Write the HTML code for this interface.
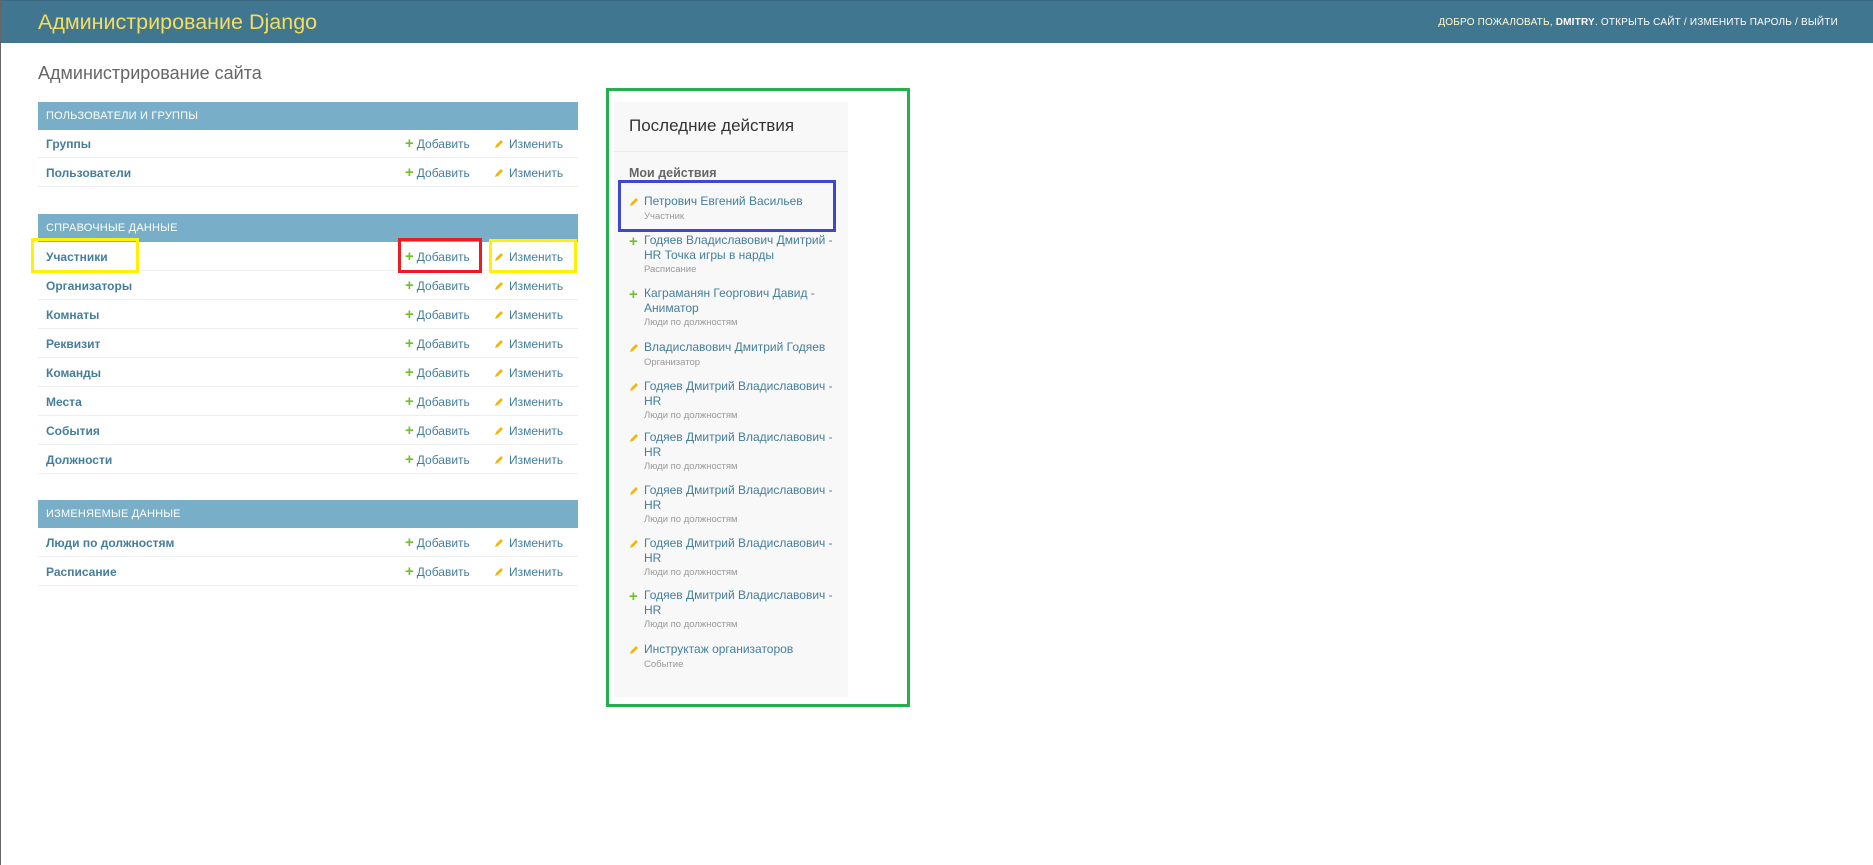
<!DOCTYPE html>
<html><head><meta charset="utf-8"><style>
*{margin:0;padding:0;box-sizing:border-box}
body{width:1873px;height:865px;background:#fff;font-family:"Liberation Sans",sans-serif;position:relative;overflow:hidden;border-left:1px solid #666}
.hdr{position:absolute;left:0;top:0;width:1873px;height:43px;background:#417690;border-top:1px solid #3a6a82}
.brand{position:absolute;left:37px;top:9px;font-size:21.5px;color:#f5dd5d;font-weight:300}
.ut{position:absolute;right:36px;top:16px;font-size:10px;color:#ffc;letter-spacing:.2px;white-space:nowrap}
.ut b{color:#fff}
.ut a{color:#fff}
h1{position:absolute;left:37px;top:63px;font-size:18px;font-weight:300;color:#666}
.cap{position:absolute;left:37px;width:540px;height:28px;background:#79aec8;color:#fff;font-size:11px;padding:8px 0 0 8px;letter-spacing:.2px}
.row{position:absolute;left:37px;width:540px;height:29px;border-bottom:1px solid #eee;font-size:12px}
.row .n{position:absolute;left:8px;top:8px;font-weight:bold;color:#447e9b}
.row .a{position:absolute;left:367px;top:8px;color:#447e9b}
.row .c{position:absolute;left:456px;top:8px;color:#447e9b}
.plus{color:#70bf2b;font-weight:bold;font-size:15px;margin-right:3px;line-height:10px}
.pen{display:inline-block;width:10px;height:10px;margin-right:5px;vertical-align:-1px}
.panel{position:absolute;left:613px;top:102px;width:234px;height:595px;background:#f8f8f8}
.panel h2{position:absolute;left:15px;top:14px;font-size:17px;font-weight:400;color:#333}
.panel .ln{position:absolute;left:0;top:49px;width:234px;height:1px;background:#eaeaea}
.panel h3{position:absolute;left:15px;top:64px;font-size:12.5px;font-weight:bold;color:#666}
.it{position:absolute;left:643px;font-size:12px;color:#447e9b;line-height:14.5px;white-space:nowrap}
.it small{display:block;font-size:9.5px;color:#999;line-height:15px}
.ic{position:absolute;left:-15px;top:3px}
.box{position:absolute;border:3px solid}
</style></head><body>
<div class="hdr"><div class="brand">Администрирование Django</div>
<div class="ut">ДОБРО ПОЖАЛОВАТЬ, <b>DMITRY</b>. <a>ОТКРЫТЬ САЙТ</a> / <a>ИЗМЕНИТЬ ПАРОЛЬ</a> / <a>ВЫЙТИ</a></div></div>
<h1>Администрирование сайта</h1>

<div class="cap" style="top:102px">ПОЛЬЗОВАТЕЛИ И ГРУППЫ</div>
<div class="row" style="top:129px"><span class="n">Группы</span><span class="a"><span class="plus">+</span>Добавить</span><span class="c"><svg class="pen" viewBox="0 0 10 10"><path d="M1 9 L2 6 L7 1 L9 3 L4 8 Z" fill="#efb80b"/></svg>Изменить</span></div>
<div class="row" style="top:158px"><span class="n">Пользователи</span><span class="a"><span class="plus">+</span>Добавить</span><span class="c"><svg class="pen" viewBox="0 0 10 10"><path d="M1 9 L2 6 L7 1 L9 3 L4 8 Z" fill="#efb80b"/></svg>Изменить</span></div>

<div class="cap" style="top:214px">СПРАВОЧНЫЕ ДАННЫЕ</div>
<div class="row" style="top:242px"><span class="n">Участники</span><span class="a"><span class="plus">+</span>Добавить</span><span class="c"><svg class="pen" viewBox="0 0 10 10"><path d="M1 9 L2 6 L7 1 L9 3 L4 8 Z" fill="#efb80b"/></svg>Изменить</span></div>
<div class="row" style="top:271px"><span class="n">Организаторы</span><span class="a"><span class="plus">+</span>Добавить</span><span class="c"><svg class="pen" viewBox="0 0 10 10"><path d="M1 9 L2 6 L7 1 L9 3 L4 8 Z" fill="#efb80b"/></svg>Изменить</span></div>
<div class="row" style="top:300px"><span class="n">Комнаты</span><span class="a"><span class="plus">+</span>Добавить</span><span class="c"><svg class="pen" viewBox="0 0 10 10"><path d="M1 9 L2 6 L7 1 L9 3 L4 8 Z" fill="#efb80b"/></svg>Изменить</span></div>
<div class="row" style="top:329px"><span class="n">Реквизит</span><span class="a"><span class="plus">+</span>Добавить</span><span class="c"><svg class="pen" viewBox="0 0 10 10"><path d="M1 9 L2 6 L7 1 L9 3 L4 8 Z" fill="#efb80b"/></svg>Изменить</span></div>
<div class="row" style="top:358px"><span class="n">Команды</span><span class="a"><span class="plus">+</span>Добавить</span><span class="c"><svg class="pen" viewBox="0 0 10 10"><path d="M1 9 L2 6 L7 1 L9 3 L4 8 Z" fill="#efb80b"/></svg>Изменить</span></div>
<div class="row" style="top:387px"><span class="n">Места</span><span class="a"><span class="plus">+</span>Добавить</span><span class="c"><svg class="pen" viewBox="0 0 10 10"><path d="M1 9 L2 6 L7 1 L9 3 L4 8 Z" fill="#efb80b"/></svg>Изменить</span></div>
<div class="row" style="top:416px"><span class="n">События</span><span class="a"><span class="plus">+</span>Добавить</span><span class="c"><svg class="pen" viewBox="0 0 10 10"><path d="M1 9 L2 6 L7 1 L9 3 L4 8 Z" fill="#efb80b"/></svg>Изменить</span></div>
<div class="row" style="top:445px"><span class="n">Должности</span><span class="a"><span class="plus">+</span>Добавить</span><span class="c"><svg class="pen" viewBox="0 0 10 10"><path d="M1 9 L2 6 L7 1 L9 3 L4 8 Z" fill="#efb80b"/></svg>Изменить</span></div>

<div class="cap" style="top:500px">ИЗМЕНЯЕМЫЕ ДАННЫЕ</div>
<div class="row" style="top:528px"><span class="n">Люди по должностям</span><span class="a"><span class="plus">+</span>Добавить</span><span class="c"><svg class="pen" viewBox="0 0 10 10"><path d="M1 9 L2 6 L7 1 L9 3 L4 8 Z" fill="#efb80b"/></svg>Изменить</span></div>
<div class="row" style="top:557px"><span class="n">Расписание</span><span class="a"><span class="plus">+</span>Добавить</span><span class="c"><svg class="pen" viewBox="0 0 10 10"><path d="M1 9 L2 6 L7 1 L9 3 L4 8 Z" fill="#efb80b"/></svg>Изменить</span></div>

<div class="panel"><h2>Последние действия</h2><div class="ln"></div><h3>Мои действия</h3></div>

<div class="it" style="top:194px"><svg class="ic pen" viewBox="0 0 10 10"><path d="M1 9 L2 6 L7 1 L9 3 L4 8 Z" fill="#efb80b"/></svg>Петрович Евгений Васильев<small>Участник</small></div>
<div class="it" style="top:233px"><span class="ic plus" style="top:4px">+</span>Годяев Владиславович Дмитрий -<br>HR Точка игры в нарды<small>Расписание</small></div>
<div class="it" style="top:286px"><span class="ic plus" style="top:4px">+</span>Каграманян Георгович Давид -<br>Аниматор<small>Люди по должностям</small></div>
<div class="it" style="top:340px"><svg class="ic pen" viewBox="0 0 10 10"><path d="M1 9 L2 6 L7 1 L9 3 L4 8 Z" fill="#efb80b"/></svg>Владиславович Дмитрий Годяев<small>Организатор</small></div>
<div class="it" style="top:379px"><svg class="ic pen" viewBox="0 0 10 10"><path d="M1 9 L2 6 L7 1 L9 3 L4 8 Z" fill="#efb80b"/></svg>Годяев Дмитрий Владиславович -<br>HR<small>Люди по должностям</small></div>
<div class="it" style="top:430px"><svg class="ic pen" viewBox="0 0 10 10"><path d="M1 9 L2 6 L7 1 L9 3 L4 8 Z" fill="#efb80b"/></svg>Годяев Дмитрий Владиславович -<br>HR<small>Люди по должностям</small></div>
<div class="it" style="top:483px"><svg class="ic pen" viewBox="0 0 10 10"><path d="M1 9 L2 6 L7 1 L9 3 L4 8 Z" fill="#efb80b"/></svg>Годяев Дмитрий Владиславович -<br>HR<small>Люди по должностям</small></div>
<div class="it" style="top:536px"><svg class="ic pen" viewBox="0 0 10 10"><path d="M1 9 L2 6 L7 1 L9 3 L4 8 Z" fill="#efb80b"/></svg>Годяев Дмитрий Владиславович -<br>HR<small>Люди по должностям</small></div>
<div class="it" style="top:588px"><span class="ic plus" style="top:4px">+</span>Годяев Дмитрий Владиславович -<br>HR<small>Люди по должностям</small></div>
<div class="it" style="top:642px"><svg class="ic pen" viewBox="0 0 10 10"><path d="M1 9 L2 6 L7 1 L9 3 L4 8 Z" fill="#efb80b"/></svg>Инструктаж организаторов<small>Событие</small></div>

<div class="box" style="left:605px;top:88px;width:304px;height:619px;border-color:#22b14c"></div>
<div class="box" style="left:617px;top:180px;width:218px;height:52px;border-color:#3f48cc"></div>
<div class="box" style="left:30px;top:238px;width:108px;height:35px;border-color:#fff200"></div>
<div class="box" style="left:397px;top:238px;width:84px;height:35px;border-color:#ed1c24"></div>
<div class="box" style="left:488px;top:239px;width:88px;height:34px;border-color:#fff200"></div>
</body></html>
